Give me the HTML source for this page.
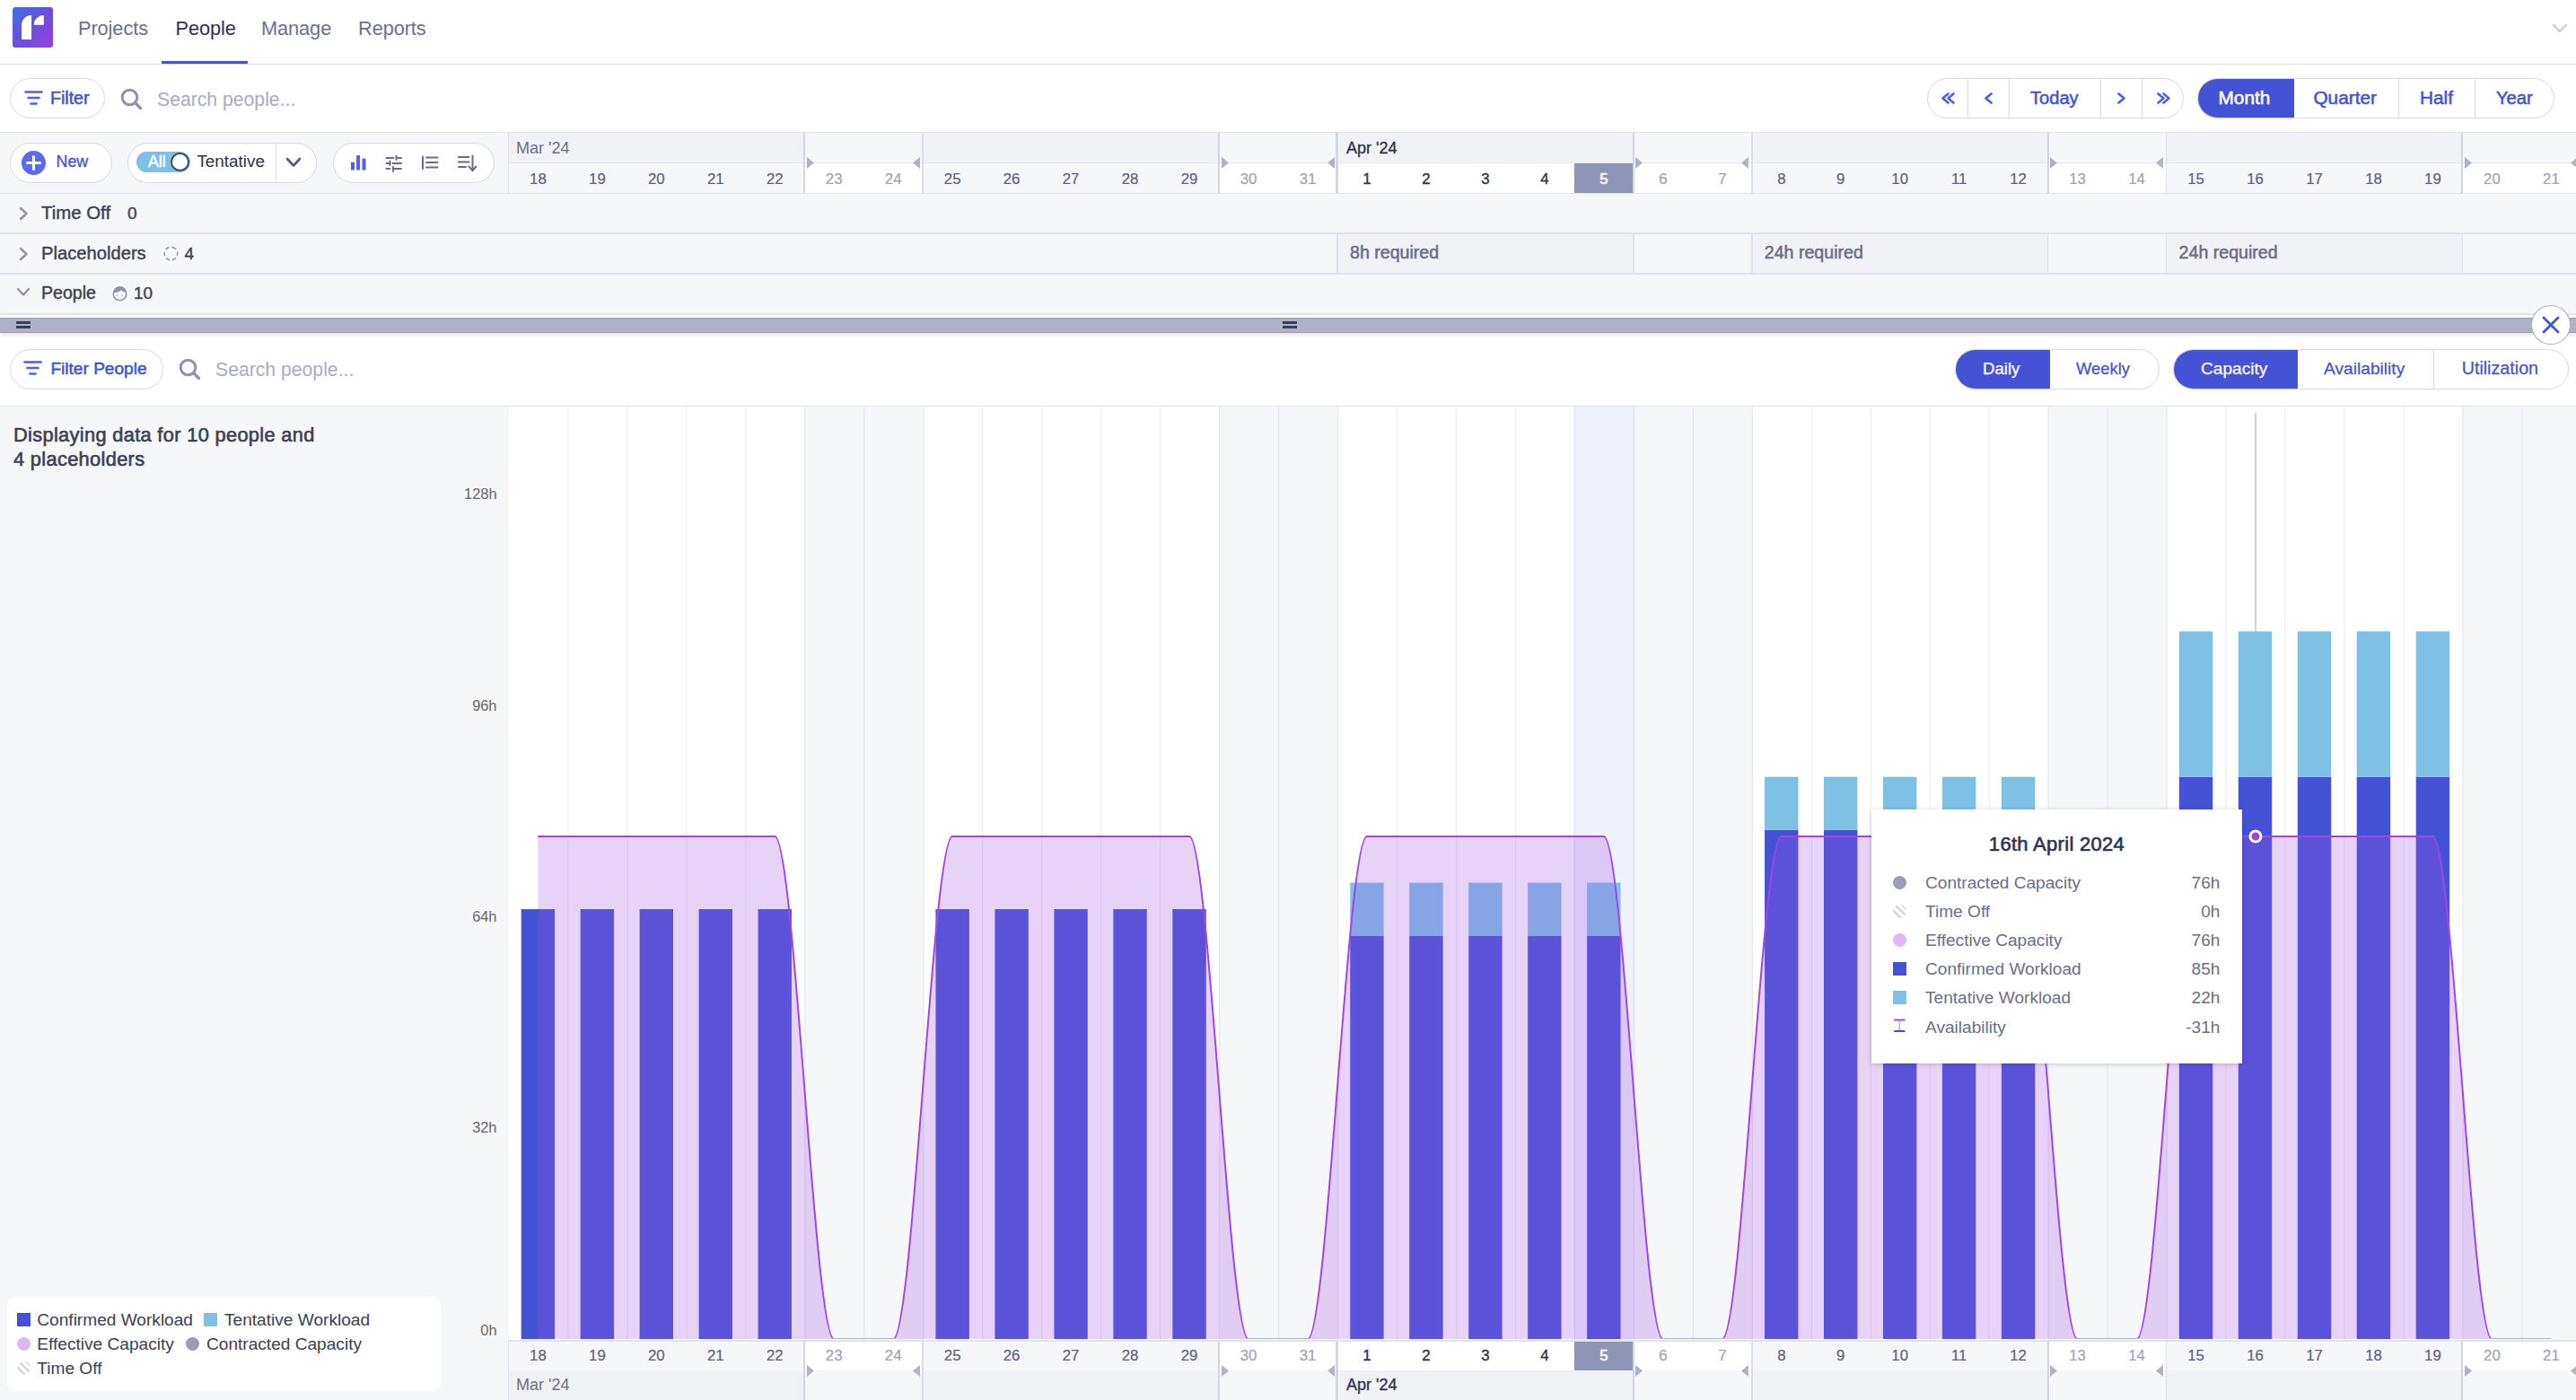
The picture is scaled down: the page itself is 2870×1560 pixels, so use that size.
<!DOCTYPE html><html><head><meta charset="utf-8"><style>

*{margin:0;padding:0;box-sizing:border-box}
html,body{width:2870px;height:1560px;overflow:hidden;background:#fff;font-family:"Liberation Sans", sans-serif}
.a{position:absolute}
.t{position:absolute;white-space:nowrap;line-height:1}
.btn{position:absolute;border:1.5px solid #d6d8e4;border-radius:30px;background:#fff}

</style></head><body>
<div class="a" style="left:0;top:0;width:2870px;height:72px;background:#fff;border-bottom:1px solid #dfe1e9"></div>
<svg class="a" style="left:14px;top:8px" width="45" height="45" viewBox="0 0 45 45">
<defs><linearGradient id="lg" x1="0" y1="0" x2="1" y2="1"><stop offset="0" stop-color="#3d6ee6"/><stop offset="0.5" stop-color="#6a4fdf"/><stop offset="1" stop-color="#9b3ed8"/></linearGradient></defs>
<rect x="0" y="0" width="45" height="45" rx="3" fill="url(#lg)"/>
<path d="M21.07 8.9 L21.07 35.9 L10.1 35.9 L10.1 19.9 A10.97 11 0 0 1 21.07 8.9 Z" fill="#fff"/>
<path d="M34.8 8.9 L34.8 19.7 L23.8 19.7 A11 10.8 0 0 1 34.8 8.9 Z" fill="#fff"/>
</svg>
<div class="t" style="left:87.0px;top:20.9px;font-size:21.8px;color:#6b7190;font-weight:400;letter-spacing:-0.1px">Projects</div>
<div class="t" style="left:195.5px;top:20.9px;font-size:21.8px;color:#2d3250;font-weight:400;letter-spacing:-0.1px">People</div>
<div class="t" style="left:291.0px;top:20.9px;font-size:21.8px;color:#6b7190;font-weight:400;letter-spacing:-0.1px">Manage</div>
<div class="t" style="left:399.0px;top:20.9px;font-size:21.8px;color:#6b7190;font-weight:400;letter-spacing:-0.1px">Reports</div>
<div class="a" style="left:180px;top:68px;width:96px;height:3px;background:#4453d6"></div>
<svg class="a" style="left:2843px;top:26px" width="18" height="12" viewBox="0 0 18 12"><path d="M2 2 L9 9 L16 2" fill="none" stroke="#c8cbd9" stroke-width="2.2" stroke-linecap="round" stroke-linejoin="round"/></svg>
<div class="btn" style="left:11px;top:87px;width:106px;height:45px"></div>
<svg class="a" style="left:26.5px;top:100.5px" width="21" height="17" viewBox="0 0 21 17"><g stroke="#4f5ff0" stroke-width="2.6" stroke-linecap="round"><line x1="1.5" y1="1.5" x2="19.5" y2="1.5"/><line x1="4.5" y1="8" x2="16.5" y2="8"/><line x1="7.5" y1="14.5" x2="13.5" y2="14.5"/></g></svg>
<div class="t" style="left:56.0px;top:99.6px;font-size:19.6px;color:#4453d6;font-weight:400;-webkit-text-stroke:0.55px #4453d6;">Filter</div>
<svg class="a" style="left:134px;top:98px" width="25" height="25" viewBox="0 0 25 25"><circle cx="10.5" cy="10.5" r="8.3" fill="none" stroke="#8f93ab" stroke-width="3"/><line x1="16.8" y1="16.8" x2="22.5" y2="22.5" stroke="#8f93ab" stroke-width="3.4" stroke-linecap="round"/></svg>
<div class="t" style="left:175.0px;top:100.0px;font-size:21.2px;color:#a9acc3;font-weight:400;">Search people...</div>
<div class="btn" style="left:2147px;top:87px;width:286px;height:45px"></div>
<div class="a" style="left:2191.7px;top:87px;width:1.5px;height:45px;background:#d6d8e4"></div>
<div class="a" style="left:2237.7px;top:87px;width:1.5px;height:45px;background:#d6d8e4"></div>
<div class="a" style="left:2339.6px;top:87px;width:1.5px;height:45px;background:#d6d8e4"></div>
<div class="a" style="left:2385.6px;top:87px;width:1.5px;height:45px;background:#d6d8e4"></div>
<svg class="a" style="left:2162.5px;top:102.5px" width="9" height="13" viewBox="0 0 9 13"><path d="M7.5 1.5 L1.5 6.5 L7.5 11.5" fill="none" stroke="#4f5ff0" stroke-width="2.6" stroke-linecap="round" stroke-linejoin="round"/></svg>
<svg class="a" style="left:2168.5px;top:102.5px" width="9" height="13" viewBox="0 0 9 13"><path d="M7.5 1.5 L1.5 6.5 L7.5 11.5" fill="none" stroke="#4f5ff0" stroke-width="2.6" stroke-linecap="round" stroke-linejoin="round"/></svg>
<svg class="a" style="left:2211px;top:102.5px" width="9" height="13" viewBox="0 0 9 13"><path d="M7.5 1.5 L1.5 6.5 L7.5 11.5" fill="none" stroke="#4f5ff0" stroke-width="2.6" stroke-linecap="round" stroke-linejoin="round"/></svg>
<svg class="a" style="left:2358.5px;top:102.5px" width="9" height="13" viewBox="0 0 9 13"><path d="M1.5 1.5 L7.5 6.5 L1.5 11.5" fill="none" stroke="#4f5ff0" stroke-width="2.6" stroke-linecap="round" stroke-linejoin="round"/></svg>
<svg class="a" style="left:2402.5px;top:102.5px" width="9" height="13" viewBox="0 0 9 13"><path d="M1.5 1.5 L7.5 6.5 L1.5 11.5" fill="none" stroke="#4f5ff0" stroke-width="2.6" stroke-linecap="round" stroke-linejoin="round"/></svg>
<svg class="a" style="left:2408.5px;top:102.5px" width="9" height="13" viewBox="0 0 9 13"><path d="M1.5 1.5 L7.5 6.5 L1.5 11.5" fill="none" stroke="#4f5ff0" stroke-width="2.6" stroke-linecap="round" stroke-linejoin="round"/></svg>
<div class="t" style="left:2262.0px;top:98.9px;font-size:20.1px;color:#4453d6;font-weight:400;-webkit-text-stroke:0.55px #4453d6;">Today</div>
<div class="btn" style="left:2448px;top:87px;width:398px;height:45px;overflow:hidden"><div class="a" style="left:-1px;top:-1px;width:107.5px;height:45px;background:#4453d6"></div></div>
<div class="a" style="left:2671.8px;top:87px;width:1.5px;height:45px;background:#d6d8e4"></div>
<div class="a" style="left:2756.9px;top:87px;width:1.5px;height:45px;background:#d6d8e4"></div>
<div class="t" style="left:2471.5px;top:98.8px;font-size:20.8px;color:#fff;font-weight:400;-webkit-text-stroke:0.55px #fff;">Month</div>
<div class="t" style="left:2577.4px;top:98.8px;font-size:20.8px;color:#4453d6;font-weight:400;-webkit-text-stroke:0.55px #4453d6;">Quarter</div>
<div class="t" style="left:2696.0px;top:98.8px;font-size:20.8px;color:#4453d6;font-weight:400;-webkit-text-stroke:0.55px #4453d6;">Half</div>
<div class="t" style="left:2781.0px;top:99.3px;font-size:20.2px;color:#4453d6;font-weight:400;-webkit-text-stroke:0.55px #4453d6;">Year</div>
<div class="a" style="left:0;top:147px;width:2870px;height:203px;background:#f6f7f9;border-top:1.5px solid #e2e4ec"></div>
<div class="a" style="left:566.40px;top:148px;width:66.47px;height:33.5px;background:#f1f2f5"></div>
<div class="a" style="left:566.40px;top:181.5px;width:66.47px;height:33.5px;background:#f6f7f9"></div>
<div class="a" style="left:632.37px;top:148px;width:66.47px;height:33.5px;background:#f1f2f5"></div>
<div class="a" style="left:632.37px;top:181.5px;width:66.47px;height:33.5px;background:#f6f7f9"></div>
<div class="a" style="left:698.34px;top:148px;width:66.47px;height:33.5px;background:#f1f2f5"></div>
<div class="a" style="left:698.34px;top:181.5px;width:66.47px;height:33.5px;background:#f6f7f9"></div>
<div class="a" style="left:764.31px;top:148px;width:66.47px;height:33.5px;background:#f1f2f5"></div>
<div class="a" style="left:764.31px;top:181.5px;width:66.47px;height:33.5px;background:#f6f7f9"></div>
<div class="a" style="left:830.28px;top:148px;width:66.47px;height:33.5px;background:#f1f2f5"></div>
<div class="a" style="left:830.28px;top:181.5px;width:66.47px;height:33.5px;background:#f6f7f9"></div>
<div class="a" style="left:896.25px;top:148px;width:66.47px;height:33.5px;background:#f6f7f9"></div>
<div class="a" style="left:896.25px;top:181.5px;width:66.47px;height:33.5px;background:#fff"></div>
<div class="a" style="left:962.22px;top:148px;width:66.47px;height:33.5px;background:#f6f7f9"></div>
<div class="a" style="left:962.22px;top:181.5px;width:66.47px;height:33.5px;background:#fff"></div>
<div class="a" style="left:1028.19px;top:148px;width:66.47px;height:33.5px;background:#f1f2f5"></div>
<div class="a" style="left:1028.19px;top:181.5px;width:66.47px;height:33.5px;background:#f6f7f9"></div>
<div class="a" style="left:1094.16px;top:148px;width:66.47px;height:33.5px;background:#f1f2f5"></div>
<div class="a" style="left:1094.16px;top:181.5px;width:66.47px;height:33.5px;background:#f6f7f9"></div>
<div class="a" style="left:1160.13px;top:148px;width:66.47px;height:33.5px;background:#f1f2f5"></div>
<div class="a" style="left:1160.13px;top:181.5px;width:66.47px;height:33.5px;background:#f6f7f9"></div>
<div class="a" style="left:1226.10px;top:148px;width:66.47px;height:33.5px;background:#f1f2f5"></div>
<div class="a" style="left:1226.10px;top:181.5px;width:66.47px;height:33.5px;background:#f6f7f9"></div>
<div class="a" style="left:1292.07px;top:148px;width:66.47px;height:33.5px;background:#f1f2f5"></div>
<div class="a" style="left:1292.07px;top:181.5px;width:66.47px;height:33.5px;background:#f6f7f9"></div>
<div class="a" style="left:1358.04px;top:148px;width:66.47px;height:33.5px;background:#f6f7f9"></div>
<div class="a" style="left:1358.04px;top:181.5px;width:66.47px;height:33.5px;background:#fff"></div>
<div class="a" style="left:1424.01px;top:148px;width:66.47px;height:33.5px;background:#f6f7f9"></div>
<div class="a" style="left:1424.01px;top:181.5px;width:66.47px;height:33.5px;background:#fff"></div>
<div class="a" style="left:1489.98px;top:148px;width:66.47px;height:33.5px;background:#f1f2f5"></div>
<div class="a" style="left:1489.98px;top:181.5px;width:66.47px;height:33.5px;background:#fff"></div>
<div class="a" style="left:1555.95px;top:148px;width:66.47px;height:33.5px;background:#f1f2f5"></div>
<div class="a" style="left:1555.95px;top:181.5px;width:66.47px;height:33.5px;background:#fff"></div>
<div class="a" style="left:1621.92px;top:148px;width:66.47px;height:33.5px;background:#f1f2f5"></div>
<div class="a" style="left:1621.92px;top:181.5px;width:66.47px;height:33.5px;background:#fff"></div>
<div class="a" style="left:1687.89px;top:148px;width:66.47px;height:33.5px;background:#f1f2f5"></div>
<div class="a" style="left:1687.89px;top:181.5px;width:66.47px;height:33.5px;background:#fff"></div>
<div class="a" style="left:1753.86px;top:148px;width:66.47px;height:33.5px;background:#f1f2f5"></div>
<div class="a" style="left:1753.86px;top:181.5px;width:66.47px;height:33.5px;background:#8e95b8"></div>
<div class="a" style="left:1819.83px;top:148px;width:66.47px;height:33.5px;background:#f6f7f9"></div>
<div class="a" style="left:1819.83px;top:181.5px;width:66.47px;height:33.5px;background:#fff"></div>
<div class="a" style="left:1885.80px;top:148px;width:66.47px;height:33.5px;background:#f6f7f9"></div>
<div class="a" style="left:1885.80px;top:181.5px;width:66.47px;height:33.5px;background:#fff"></div>
<div class="a" style="left:1951.77px;top:148px;width:66.47px;height:33.5px;background:#f1f2f5"></div>
<div class="a" style="left:1951.77px;top:181.5px;width:66.47px;height:33.5px;background:#f6f7f9"></div>
<div class="a" style="left:2017.74px;top:148px;width:66.47px;height:33.5px;background:#f1f2f5"></div>
<div class="a" style="left:2017.74px;top:181.5px;width:66.47px;height:33.5px;background:#f6f7f9"></div>
<div class="a" style="left:2083.71px;top:148px;width:66.47px;height:33.5px;background:#f1f2f5"></div>
<div class="a" style="left:2083.71px;top:181.5px;width:66.47px;height:33.5px;background:#f6f7f9"></div>
<div class="a" style="left:2149.68px;top:148px;width:66.47px;height:33.5px;background:#f1f2f5"></div>
<div class="a" style="left:2149.68px;top:181.5px;width:66.47px;height:33.5px;background:#f6f7f9"></div>
<div class="a" style="left:2215.65px;top:148px;width:66.47px;height:33.5px;background:#f1f2f5"></div>
<div class="a" style="left:2215.65px;top:181.5px;width:66.47px;height:33.5px;background:#f6f7f9"></div>
<div class="a" style="left:2281.62px;top:148px;width:66.47px;height:33.5px;background:#f6f7f9"></div>
<div class="a" style="left:2281.62px;top:181.5px;width:66.47px;height:33.5px;background:#fff"></div>
<div class="a" style="left:2347.59px;top:148px;width:66.47px;height:33.5px;background:#f6f7f9"></div>
<div class="a" style="left:2347.59px;top:181.5px;width:66.47px;height:33.5px;background:#fff"></div>
<div class="a" style="left:2413.56px;top:148px;width:66.47px;height:33.5px;background:#f1f2f5"></div>
<div class="a" style="left:2413.56px;top:181.5px;width:66.47px;height:33.5px;background:#f6f7f9"></div>
<div class="a" style="left:2479.53px;top:148px;width:66.47px;height:33.5px;background:#f1f2f5"></div>
<div class="a" style="left:2479.53px;top:181.5px;width:66.47px;height:33.5px;background:#f6f7f9"></div>
<div class="a" style="left:2545.50px;top:148px;width:66.47px;height:33.5px;background:#f1f2f5"></div>
<div class="a" style="left:2545.50px;top:181.5px;width:66.47px;height:33.5px;background:#f6f7f9"></div>
<div class="a" style="left:2611.47px;top:148px;width:66.47px;height:33.5px;background:#f1f2f5"></div>
<div class="a" style="left:2611.47px;top:181.5px;width:66.47px;height:33.5px;background:#f6f7f9"></div>
<div class="a" style="left:2677.44px;top:148px;width:66.47px;height:33.5px;background:#f1f2f5"></div>
<div class="a" style="left:2677.44px;top:181.5px;width:66.47px;height:33.5px;background:#f6f7f9"></div>
<div class="a" style="left:2743.41px;top:148px;width:66.47px;height:33.5px;background:#f6f7f9"></div>
<div class="a" style="left:2743.41px;top:181.5px;width:66.47px;height:33.5px;background:#fff"></div>
<div class="a" style="left:2809.38px;top:148px;width:66.47px;height:33.5px;background:#f6f7f9"></div>
<div class="a" style="left:2809.38px;top:181.5px;width:66.47px;height:33.5px;background:#fff"></div>
<div class="a" style="left:566px;top:181px;width:2304px;height:1px;background:#e6e7ee"></div>
<div class="a" style="left:0;top:214.5px;width:2870px;height:1.2px;background:#e2e4ec"></div>
<div class="a" style="left:565.65px;top:148px;width:1.5px;height:67px;background:#dcdee8"></div>
<div class="a" style="left:895.25px;top:148px;width:2px;height:67px;background:#d3d5e1"></div>
<div class="a" style="left:1027.44px;top:148px;width:1.5px;height:67px;background:#dcdee8"></div>
<div class="a" style="left:1357.04px;top:148px;width:2px;height:67px;background:#d3d5e1"></div>
<div class="a" style="left:1488.48px;top:148px;width:3px;height:67px;background:#d3d5e1"></div>
<div class="a" style="left:1818.83px;top:148px;width:2px;height:67px;background:#d3d5e1"></div>
<div class="a" style="left:1951.02px;top:148px;width:1.5px;height:67px;background:#dcdee8"></div>
<div class="a" style="left:2280.62px;top:148px;width:2px;height:67px;background:#d3d5e1"></div>
<div class="a" style="left:2412.81px;top:148px;width:1.5px;height:67px;background:#dcdee8"></div>
<div class="a" style="left:2742.41px;top:148px;width:2px;height:67px;background:#d3d5e1"></div>
<div class="a" style="left:2874.60px;top:148px;width:1.5px;height:67px;background:#dcdee8"></div>
<svg class="a" style="left:898.8px;top:175.0px" width="9" height="13" viewBox="0 0 9 13"><path d="M0 0 L8 6.5 L0 13 Z" fill="#b0b3c6"/></svg>
<svg class="a" style="left:1015.7px;top:175.0px" width="9" height="13" viewBox="0 0 9 13"><path d="M9 0 L1 6.5 L9 13 Z" fill="#b0b3c6"/></svg>
<svg class="a" style="left:1360.5px;top:175.0px" width="9" height="13" viewBox="0 0 9 13"><path d="M0 0 L8 6.5 L0 13 Z" fill="#b0b3c6"/></svg>
<svg class="a" style="left:1477.5px;top:175.0px" width="9" height="13" viewBox="0 0 9 13"><path d="M9 0 L1 6.5 L9 13 Z" fill="#b0b3c6"/></svg>
<svg class="a" style="left:1822.3px;top:175.0px" width="9" height="13" viewBox="0 0 9 13"><path d="M0 0 L8 6.5 L0 13 Z" fill="#b0b3c6"/></svg>
<svg class="a" style="left:1939.3px;top:175.0px" width="9" height="13" viewBox="0 0 9 13"><path d="M9 0 L1 6.5 L9 13 Z" fill="#b0b3c6"/></svg>
<svg class="a" style="left:2284.1px;top:175.0px" width="9" height="13" viewBox="0 0 9 13"><path d="M0 0 L8 6.5 L0 13 Z" fill="#b0b3c6"/></svg>
<svg class="a" style="left:2401.1px;top:175.0px" width="9" height="13" viewBox="0 0 9 13"><path d="M9 0 L1 6.5 L9 13 Z" fill="#b0b3c6"/></svg>
<svg class="a" style="left:2745.9px;top:175.0px" width="9" height="13" viewBox="0 0 9 13"><path d="M0 0 L8 6.5 L0 13 Z" fill="#b0b3c6"/></svg>
<svg class="a" style="left:2862.8px;top:175.0px" width="9" height="13" viewBox="0 0 9 13"><path d="M9 0 L1 6.5 L9 13 Z" fill="#b0b3c6"/></svg>
<div class="t" style="left:575.0px;top:156.1px;font-size:18px;color:#6b6f88;font-weight:400;">Mar '24</div>
<div class="t" style="left:1500.0px;top:156.1px;font-size:18px;color:#2d3250;font-weight:400;-webkit-text-stroke:0.35px #2d3250;">Apr '24</div>
<div class="t" style="left:299.4px;width:600px;text-align:center;top:191.7px;font-size:16.8px;color:#5c6080;font-weight:400;-webkit-text-stroke:0.2px #5c6080;">18</div>
<div class="t" style="left:365.4px;width:600px;text-align:center;top:191.7px;font-size:16.8px;color:#5c6080;font-weight:400;-webkit-text-stroke:0.2px #5c6080;">19</div>
<div class="t" style="left:431.3px;width:600px;text-align:center;top:191.7px;font-size:16.8px;color:#5c6080;font-weight:400;-webkit-text-stroke:0.2px #5c6080;">20</div>
<div class="t" style="left:497.3px;width:600px;text-align:center;top:191.7px;font-size:16.8px;color:#5c6080;font-weight:400;-webkit-text-stroke:0.2px #5c6080;">21</div>
<div class="t" style="left:563.3px;width:600px;text-align:center;top:191.7px;font-size:16.8px;color:#5c6080;font-weight:400;-webkit-text-stroke:0.2px #5c6080;">22</div>
<div class="t" style="left:629.2px;width:600px;text-align:center;top:191.7px;font-size:16.8px;color:#9fa2b6;font-weight:400;-webkit-text-stroke:0.2px #9fa2b6;">23</div>
<div class="t" style="left:695.2px;width:600px;text-align:center;top:191.7px;font-size:16.8px;color:#9fa2b6;font-weight:400;-webkit-text-stroke:0.2px #9fa2b6;">24</div>
<div class="t" style="left:761.2px;width:600px;text-align:center;top:191.7px;font-size:16.8px;color:#5c6080;font-weight:400;-webkit-text-stroke:0.2px #5c6080;">25</div>
<div class="t" style="left:827.1px;width:600px;text-align:center;top:191.7px;font-size:16.8px;color:#5c6080;font-weight:400;-webkit-text-stroke:0.2px #5c6080;">26</div>
<div class="t" style="left:893.1px;width:600px;text-align:center;top:191.7px;font-size:16.8px;color:#5c6080;font-weight:400;-webkit-text-stroke:0.2px #5c6080;">27</div>
<div class="t" style="left:959.1px;width:600px;text-align:center;top:191.7px;font-size:16.8px;color:#5c6080;font-weight:400;-webkit-text-stroke:0.2px #5c6080;">28</div>
<div class="t" style="left:1025.1px;width:600px;text-align:center;top:191.7px;font-size:16.8px;color:#5c6080;font-weight:400;-webkit-text-stroke:0.2px #5c6080;">29</div>
<div class="t" style="left:1091.0px;width:600px;text-align:center;top:191.7px;font-size:16.8px;color:#9fa2b6;font-weight:400;-webkit-text-stroke:0.2px #9fa2b6;">30</div>
<div class="t" style="left:1157.0px;width:600px;text-align:center;top:191.7px;font-size:16.8px;color:#9fa2b6;font-weight:400;-webkit-text-stroke:0.2px #9fa2b6;">31</div>
<div class="t" style="left:1223.0px;width:600px;text-align:center;top:191.7px;font-size:16.8px;color:#2d3250;font-weight:400;-webkit-text-stroke:0.35px #2d3250;">1</div>
<div class="t" style="left:1288.9px;width:600px;text-align:center;top:191.7px;font-size:16.8px;color:#2d3250;font-weight:400;-webkit-text-stroke:0.35px #2d3250;">2</div>
<div class="t" style="left:1354.9px;width:600px;text-align:center;top:191.7px;font-size:16.8px;color:#2d3250;font-weight:400;-webkit-text-stroke:0.35px #2d3250;">3</div>
<div class="t" style="left:1420.9px;width:600px;text-align:center;top:191.7px;font-size:16.8px;color:#2d3250;font-weight:400;-webkit-text-stroke:0.35px #2d3250;">4</div>
<div class="t" style="left:1486.8px;width:600px;text-align:center;top:191.7px;font-size:16.8px;color:#fff;font-weight:400;-webkit-text-stroke:0.6px #fff;">5</div>
<div class="t" style="left:1552.8px;width:600px;text-align:center;top:191.7px;font-size:16.8px;color:#9fa2b6;font-weight:400;-webkit-text-stroke:0.2px #9fa2b6;">6</div>
<div class="t" style="left:1618.8px;width:600px;text-align:center;top:191.7px;font-size:16.8px;color:#9fa2b6;font-weight:400;-webkit-text-stroke:0.2px #9fa2b6;">7</div>
<div class="t" style="left:1684.8px;width:600px;text-align:center;top:191.7px;font-size:16.8px;color:#5c6080;font-weight:400;-webkit-text-stroke:0.2px #5c6080;">8</div>
<div class="t" style="left:1750.7px;width:600px;text-align:center;top:191.7px;font-size:16.8px;color:#5c6080;font-weight:400;-webkit-text-stroke:0.2px #5c6080;">9</div>
<div class="t" style="left:1816.7px;width:600px;text-align:center;top:191.7px;font-size:16.8px;color:#5c6080;font-weight:400;-webkit-text-stroke:0.2px #5c6080;">10</div>
<div class="t" style="left:1882.7px;width:600px;text-align:center;top:191.7px;font-size:16.8px;color:#5c6080;font-weight:400;-webkit-text-stroke:0.2px #5c6080;">11</div>
<div class="t" style="left:1948.6px;width:600px;text-align:center;top:191.7px;font-size:16.8px;color:#5c6080;font-weight:400;-webkit-text-stroke:0.2px #5c6080;">12</div>
<div class="t" style="left:2014.6px;width:600px;text-align:center;top:191.7px;font-size:16.8px;color:#9fa2b6;font-weight:400;-webkit-text-stroke:0.2px #9fa2b6;">13</div>
<div class="t" style="left:2080.6px;width:600px;text-align:center;top:191.7px;font-size:16.8px;color:#9fa2b6;font-weight:400;-webkit-text-stroke:0.2px #9fa2b6;">14</div>
<div class="t" style="left:2146.5px;width:600px;text-align:center;top:191.7px;font-size:16.8px;color:#5c6080;font-weight:400;-webkit-text-stroke:0.2px #5c6080;">15</div>
<div class="t" style="left:2212.5px;width:600px;text-align:center;top:191.7px;font-size:16.8px;color:#5c6080;font-weight:400;-webkit-text-stroke:0.2px #5c6080;">16</div>
<div class="t" style="left:2278.5px;width:600px;text-align:center;top:191.7px;font-size:16.8px;color:#5c6080;font-weight:400;-webkit-text-stroke:0.2px #5c6080;">17</div>
<div class="t" style="left:2344.5px;width:600px;text-align:center;top:191.7px;font-size:16.8px;color:#5c6080;font-weight:400;-webkit-text-stroke:0.2px #5c6080;">18</div>
<div class="t" style="left:2410.4px;width:600px;text-align:center;top:191.7px;font-size:16.8px;color:#5c6080;font-weight:400;-webkit-text-stroke:0.2px #5c6080;">19</div>
<div class="t" style="left:2476.4px;width:600px;text-align:center;top:191.7px;font-size:16.8px;color:#9fa2b6;font-weight:400;-webkit-text-stroke:0.2px #9fa2b6;">20</div>
<div class="t" style="left:2542.4px;width:600px;text-align:center;top:191.7px;font-size:16.8px;color:#9fa2b6;font-weight:400;-webkit-text-stroke:0.2px #9fa2b6;">21</div>
<div class="btn" style="left:11px;top:159px;width:114px;height:45px"></div>
<svg class="a" style="left:24px;top:168px" width="27" height="27" viewBox="0 0 27 27"><circle cx="13.5" cy="13.5" r="13.5" fill="#5b6af0"/><g stroke="#fff" stroke-width="3" stroke-linecap="round"><line x1="13.5" y1="6.5" x2="13.5" y2="20.5"/><line x1="6.5" y1="13.5" x2="20.5" y2="13.5"/></g></svg>
<div class="t" style="left:62.5px;top:171.8px;font-size:17.9px;color:#4453d6;font-weight:400;-webkit-text-stroke:0.3px #4453d6;">New</div>
<div class="btn" style="left:142px;top:159px;width:211px;height:45px"></div>
<div class="a" style="left:306.5px;top:159px;width:1.5px;height:45px;background:#d6d8e4"></div>
<div class="a" style="left:152px;top:169px;width:60px;height:23px;border-radius:12px;background:#7fc1e5"></div>
<div class="t" style="left:165.0px;top:172.4px;font-size:17.8px;color:#fff;font-weight:400;-webkit-text-stroke:0.5px #fff;">All</div>
<div class="a" style="left:190px;top:169.8px;width:21px;height:21px;border-radius:50%;background:#fff;border:2px solid #3e4a5e"></div>
<div class="t" style="left:219.4px;top:170.9px;font-size:18.9px;color:#2d3250;font-weight:400;">Tentative</div>
<svg class="a" style="left:318px;top:175px" width="18" height="12" viewBox="0 0 18 12"><path d="M2 2 L9 9.5 L16 2" fill="none" stroke="#555b70" stroke-width="2.6" stroke-linecap="round" stroke-linejoin="round"/></svg>
<div class="btn" style="left:371px;top:159px;width:180px;height:45px"></div>
<svg class="a" style="left:390px;top:172px" width="19" height="19" viewBox="0 0 19 19"><g fill="#4f5ff0"><rect x="1" y="8.7" width="4" height="8.7"/><rect x="7.1" y="1.1" width="3.9" height="16.3"/><rect x="13.5" y="4.6" width="4" height="12.8"/></g></svg>
<svg class="a" style="left:429px;top:173px" width="20" height="19" viewBox="0 0 20 19"><g stroke="#676c8c" stroke-width="1.9" stroke-linecap="round"><line x1="1.5" y1="3" x2="9.5" y2="3"/><line x1="13" y1="3" x2="18" y2="3"/><line x1="12.5" y1="0.8" x2="12.5" y2="5"/><line x1="1.5" y1="9" x2="5" y2="9"/><line x1="8.5" y1="9" x2="18" y2="9"/><line x1="5.5" y1="6.8" x2="5.5" y2="11"/><line x1="1.5" y1="15" x2="5.5" y2="15"/><line x1="9" y1="15" x2="18" y2="15"/><line x1="9" y1="12.8" x2="9" y2="18"/></g></svg>
<svg class="a" style="left:469px;top:173px" width="20" height="17" viewBox="0 0 20 17"><g stroke="#676c8c" stroke-width="2" stroke-linecap="round"><line x1="2" y1="1.5" x2="2" y2="15"/><line x1="6" y1="2.5" x2="18.5" y2="2.5"/><line x1="6" y1="8" x2="18.5" y2="8"/><line x1="6" y1="13.5" x2="18.5" y2="13.5"/></g></svg>
<svg class="a" style="left:509px;top:172px" width="24" height="20" viewBox="0 0 24 20"><g stroke="#676c8c" stroke-width="2" stroke-linecap="round" fill="none"><line x1="2" y1="3" x2="13.5" y2="3"/><line x1="2" y1="8.5" x2="13.5" y2="8.5"/><line x1="2" y1="14" x2="10" y2="14"/><line x1="17.5" y1="1.5" x2="17.5" y2="18"/><path d="M13.5 13.5 L17.5 18 L21.5 13.5"/></g></svg>
<div class="a" style="left:565.5px;top:148px;width:1.5px;height:67px;background:#dfe1ea"></div>
<div class="a" style="left:0;top:259px;width:2870px;height:2px;background:#e2e4ec"></div>
<div class="a" style="left:0;top:304px;width:2870px;height:2px;background:#e2e4ec"></div>
<div class="a" style="left:0;top:348.5px;width:2870px;height:2px;background:#e2e4ec"></div>
<div class="a" style="left:0;top:350.5px;width:2870px;height:3.5px;background:#fff"></div>
<div class="a" style="left:1489.98px;top:261px;width:329.85px;height:43px;background:#f1f2f5"></div>
<div class="a" style="left:1951.77px;top:261px;width:329.85px;height:43px;background:#f1f2f5"></div>
<div class="a" style="left:2413.56px;top:261px;width:329.85px;height:43px;background:#f1f2f5"></div>
<div class="a" style="left:1489.23px;top:261px;width:1.5px;height:43px;background:#e0e2ea"></div>
<div class="a" style="left:1819.08px;top:261px;width:1.5px;height:43px;background:#e0e2ea"></div>
<div class="a" style="left:1951.02px;top:261px;width:1.5px;height:43px;background:#e0e2ea"></div>
<div class="a" style="left:2280.87px;top:261px;width:1.5px;height:43px;background:#e0e2ea"></div>
<div class="a" style="left:2412.81px;top:261px;width:1.5px;height:43px;background:#e0e2ea"></div>
<div class="a" style="left:2742.66px;top:261px;width:1.5px;height:43px;background:#e0e2ea"></div>
<div class="t" style="left:1504.0px;top:272.3px;font-size:19.6px;color:#6b6f88;font-weight:400;-webkit-text-stroke:0.55px #6b6f88;">8h required</div>
<div class="t" style="left:1965.8px;top:272.3px;font-size:19.6px;color:#6b6f88;font-weight:400;-webkit-text-stroke:0.55px #6b6f88;">24h required</div>
<div class="t" style="left:2427.6px;top:272.3px;font-size:19.6px;color:#6b6f88;font-weight:400;-webkit-text-stroke:0.55px #6b6f88;">24h required</div>
<svg class="a" style="left:20.5px;top:229.5px" width="11" height="16" viewBox="0 0 11 16"><path d="M2 2 L8.5 8 L2 14" fill="none" stroke="#8f93ab" stroke-width="2.4" stroke-linecap="round" stroke-linejoin="round"/></svg>
<div class="t" style="left:46.0px;top:226.7px;font-size:20.4px;color:#3b4054;font-weight:400;-webkit-text-stroke:0.4px #3b4054;">Time Off</div>
<div class="t" style="left:142.0px;top:227.8px;font-size:19px;color:#3b4054;font-weight:400;-webkit-text-stroke:0.35px #3b4054;">0</div>
<svg class="a" style="left:20.5px;top:274.5px" width="11" height="16" viewBox="0 0 11 16"><path d="M2 2 L8.5 8 L2 14" fill="none" stroke="#8f93ab" stroke-width="2.4" stroke-linecap="round" stroke-linejoin="round"/></svg>
<div class="t" style="left:46.0px;top:271.8px;font-size:20.2px;color:#3b4054;font-weight:400;-webkit-text-stroke:0.4px #3b4054;">Placeholders</div>
<svg class="a" style="left:181.5px;top:274px" width="17" height="17" viewBox="0 0 17 17"><circle cx="8.5" cy="8.5" r="7.3" fill="none" stroke="#8f93ab" stroke-width="1.5" stroke-dasharray="4.6 2.8" transform="rotate(-75 8.5 8.5)"/></svg>
<div class="t" style="left:205.5px;top:272.5px;font-size:19px;color:#3b4054;font-weight:400;-webkit-text-stroke:0.35px #3b4054;">4</div>
<svg class="a" style="left:18px;top:320px" width="16" height="11" viewBox="0 0 16 11"><path d="M2 2 L8 8.5 L14 2" fill="none" stroke="#8f93ab" stroke-width="2.4" stroke-linecap="round" stroke-linejoin="round"/></svg>
<div class="t" style="left:46.0px;top:317.3px;font-size:19.6px;color:#3b4054;font-weight:400;-webkit-text-stroke:0.4px #3b4054;">People</div>
<svg class="a" style="left:124.5px;top:318.5px" width="17" height="17" viewBox="0 0 17 17"><circle cx="8.5" cy="8.5" r="7.2" fill="none" stroke="#8f93ab" stroke-width="1.6"/><path d="M1.3 7.2 A7.2 7.2 0 0 1 15.7 7.2 L15.7 6.6 C13.5 6.4 11.5 5.6 10.2 4.2 C8.5 6 5 7 1.3 7.2 Z" fill="#8f93ab"/><circle cx="5.5" cy="10.2" r="0.8" fill="#8f93ab"/><circle cx="11.2" cy="10.2" r="0.8" fill="#8f93ab"/></svg>
<div class="t" style="left:149.0px;top:317.2px;font-size:19px;color:#3b4054;font-weight:400;-webkit-text-stroke:0.35px #3b4054;">10</div>
<div class="a" style="left:0;top:354px;width:2870px;height:17px;background:#afb1c4;border-top:1.5px solid #9a9db2;border-bottom:1.5px solid #9a9db2;box-shadow:0 2px 5px rgba(0,0,0,0.12)"></div>
<div class="a" style="left:17.5px;top:358px;width:16px;height:2.9px;background:#373d5c"></div>
<div class="a" style="left:17.5px;top:363px;width:16px;height:2.9px;background:#373d5c"></div>
<div class="a" style="left:1428.5px;top:358px;width:16px;height:2.9px;background:#373d5c"></div>
<div class="a" style="left:1428.5px;top:363px;width:16px;height:2.9px;background:#373d5c"></div>
<div class="a" style="left:2820px;top:339.5px;width:43.5px;height:44.5px;border-radius:50%;background:#fff;border:1.5px solid #a9acc0"></div>
<svg class="a" style="left:2832px;top:352px" width="20" height="20" viewBox="0 0 20 20"><g stroke="#4453d6" stroke-width="2.8" stroke-linecap="round"><line x1="2" y1="2" x2="18" y2="18"/><line x1="18" y1="2" x2="2" y2="18"/></g></svg>
<div class="btn" style="left:11px;top:389px;width:171px;height:45px"></div>
<svg class="a" style="left:26px;top:402px" width="21" height="17" viewBox="0 0 21 17"><g stroke="#4f5ff0" stroke-width="2.6" stroke-linecap="round"><line x1="1.5" y1="1.5" x2="19.5" y2="1.5"/><line x1="4.5" y1="8" x2="16.5" y2="8"/><line x1="7.5" y1="14.5" x2="13.5" y2="14.5"/></g></svg>
<div class="t" style="left:56.4px;top:401.3px;font-size:19.1px;color:#4453d6;font-weight:400;-webkit-text-stroke:0.55px #4453d6;">Filter People</div>
<svg class="a" style="left:199px;top:399px" width="25" height="25" viewBox="0 0 25 25"><circle cx="10.5" cy="10.5" r="8.3" fill="none" stroke="#8f93ab" stroke-width="3"/><line x1="16.8" y1="16.8" x2="22.5" y2="22.5" stroke="#8f93ab" stroke-width="3.4" stroke-linecap="round"/></svg>
<div class="t" style="left:240.0px;top:401.0px;font-size:21.2px;color:#a9acc3;font-weight:400;">Search people...</div>
<div class="btn" style="left:2178px;top:389px;width:228px;height:45px;overflow:hidden"><div class="a" style="left:-1px;top:-1px;width:105.5px;height:45px;background:#4453d6"></div></div>
<div class="t" style="left:2209.0px;top:401.7px;font-size:18.6px;color:#fff;font-weight:400;-webkit-text-stroke:0.25px #fff;">Daily</div>
<div class="t" style="left:2313.0px;top:401.9px;font-size:18.4px;color:#4453d6;font-weight:400;-webkit-text-stroke:0.25px #4453d6;">Weekly</div>
<div class="btn" style="left:2421px;top:389px;width:441px;height:45px;overflow:hidden"><div class="a" style="left:-1px;top:-1px;width:139px;height:45px;background:#4453d6"></div></div>
<div class="a" style="left:2710.7px;top:389px;width:1.5px;height:45px;background:#d6d8e4"></div>
<div class="t" style="left:2452.0px;top:401.3px;font-size:19.1px;color:#fff;font-weight:400;-webkit-text-stroke:0.25px #fff;">Capacity</div>
<div class="t" style="left:2589.0px;top:401.2px;font-size:19.2px;color:#4453d6;font-weight:400;-webkit-text-stroke:0.25px #4453d6;">Availability</div>
<div class="t" style="left:2742.7px;top:400.8px;font-size:19.7px;color:#4453d6;font-weight:400;-webkit-text-stroke:0.25px #4453d6;">Utilization</div>
<div class="a" style="left:0;top:451.5px;width:2870px;height:1.5px;background:#e2e4ec"></div>
<div class="a" style="left:0;top:453px;width:566.5px;height:1107px;background:#f6f7f9"></div>
<div class="t" style="left:15.0px;top:473.7px;font-size:21.8px;color:#3b4054;font-weight:400;-webkit-text-stroke:0.6px #3b4054;letter-spacing:0.33px">Displaying data for 10 people and</div>
<div class="t" style="left:15.0px;top:500.7px;font-size:21.8px;color:#3b4054;font-weight:400;-webkit-text-stroke:0.6px #3b4054;letter-spacing:0.33px">4 placeholders</div>
<div class="t" style="right:2316.5px;top:541.5px;font-size:16.4px;color:#666666;font-weight:400;text-align:right;">128h</div>
<div class="t" style="right:2316.5px;top:778.0px;font-size:16.4px;color:#666666;font-weight:400;text-align:right;">96h</div>
<div class="t" style="right:2316.5px;top:1013.3px;font-size:16.4px;color:#666666;font-weight:400;text-align:right;">64h</div>
<div class="t" style="right:2316.5px;top:1248.1px;font-size:16.4px;color:#666666;font-weight:400;text-align:right;">32h</div>
<div class="t" style="right:2316.5px;top:1474.1px;font-size:16.4px;color:#666666;font-weight:400;text-align:right;">0h</div>
<svg class="a" style="left:0;top:0" width="2870" height="1560" viewBox="0 0 2870 1560"><rect x="896.25" y="453" width="65.97" height="1040" fill="#f6f7f9"/><rect x="962.22" y="453" width="65.97" height="1040" fill="#f6f7f9"/><rect x="1358.04" y="453" width="65.97" height="1040" fill="#f6f7f9"/><rect x="1424.01" y="453" width="65.97" height="1040" fill="#f6f7f9"/><rect x="1819.83" y="453" width="65.97" height="1040" fill="#f6f7f9"/><rect x="1885.80" y="453" width="65.97" height="1040" fill="#f6f7f9"/><rect x="2281.62" y="453" width="65.97" height="1040" fill="#f6f7f9"/><rect x="2347.59" y="453" width="65.97" height="1040" fill="#f6f7f9"/><rect x="2743.41" y="453" width="65.97" height="1040" fill="#f6f7f9"/><rect x="2809.38" y="453" width="65.97" height="1040" fill="#f6f7f9"/><rect x="1753.86" y="453" width="65.97" height="1040" fill="#eff1fc"/><line x1="632.97" y1="453" x2="632.97" y2="1493" stroke="#eeeff3" stroke-width="1.2"/><line x1="698.94" y1="453" x2="698.94" y2="1493" stroke="#eeeff3" stroke-width="1.2"/><line x1="764.91" y1="453" x2="764.91" y2="1493" stroke="#eeeff3" stroke-width="1.2"/><line x1="830.88" y1="453" x2="830.88" y2="1493" stroke="#eeeff3" stroke-width="1.2"/><line x1="896.85" y1="453" x2="896.85" y2="1493" stroke="#e6e7ee" stroke-width="1.2"/><line x1="962.82" y1="453" x2="962.82" y2="1493" stroke="#e6e7ee" stroke-width="1.2"/><line x1="1028.79" y1="453" x2="1028.79" y2="1493" stroke="#e6e7ee" stroke-width="1.2"/><line x1="1094.76" y1="453" x2="1094.76" y2="1493" stroke="#eeeff3" stroke-width="1.2"/><line x1="1160.73" y1="453" x2="1160.73" y2="1493" stroke="#eeeff3" stroke-width="1.2"/><line x1="1226.70" y1="453" x2="1226.70" y2="1493" stroke="#eeeff3" stroke-width="1.2"/><line x1="1292.67" y1="453" x2="1292.67" y2="1493" stroke="#eeeff3" stroke-width="1.2"/><line x1="1358.64" y1="453" x2="1358.64" y2="1493" stroke="#e6e7ee" stroke-width="1.2"/><line x1="1424.61" y1="453" x2="1424.61" y2="1493" stroke="#e6e7ee" stroke-width="1.2"/><line x1="1490.58" y1="453" x2="1490.58" y2="1493" stroke="#e6e7ee" stroke-width="1.2"/><line x1="1556.55" y1="453" x2="1556.55" y2="1493" stroke="#eeeff3" stroke-width="1.2"/><line x1="1622.52" y1="453" x2="1622.52" y2="1493" stroke="#eeeff3" stroke-width="1.2"/><line x1="1688.49" y1="453" x2="1688.49" y2="1493" stroke="#eeeff3" stroke-width="1.2"/><line x1="1754.46" y1="453" x2="1754.46" y2="1493" stroke="#dde0f5" stroke-width="1.2"/><line x1="1820.43" y1="453" x2="1820.43" y2="1493" stroke="#dde0f5" stroke-width="1.2"/><line x1="1886.40" y1="453" x2="1886.40" y2="1493" stroke="#e6e7ee" stroke-width="1.2"/><line x1="1952.37" y1="453" x2="1952.37" y2="1493" stroke="#e6e7ee" stroke-width="1.2"/><line x1="2018.34" y1="453" x2="2018.34" y2="1493" stroke="#eeeff3" stroke-width="1.2"/><line x1="2084.31" y1="453" x2="2084.31" y2="1493" stroke="#eeeff3" stroke-width="1.2"/><line x1="2150.28" y1="453" x2="2150.28" y2="1493" stroke="#eeeff3" stroke-width="1.2"/><line x1="2216.25" y1="453" x2="2216.25" y2="1493" stroke="#eeeff3" stroke-width="1.2"/><line x1="2282.22" y1="453" x2="2282.22" y2="1493" stroke="#e6e7ee" stroke-width="1.2"/><line x1="2348.19" y1="453" x2="2348.19" y2="1493" stroke="#e6e7ee" stroke-width="1.2"/><line x1="2414.16" y1="453" x2="2414.16" y2="1493" stroke="#e6e7ee" stroke-width="1.2"/><line x1="2480.13" y1="453" x2="2480.13" y2="1493" stroke="#eeeff3" stroke-width="1.2"/><line x1="2546.10" y1="453" x2="2546.10" y2="1493" stroke="#eeeff3" stroke-width="1.2"/><line x1="2612.07" y1="453" x2="2612.07" y2="1493" stroke="#eeeff3" stroke-width="1.2"/><line x1="2678.04" y1="453" x2="2678.04" y2="1493" stroke="#eeeff3" stroke-width="1.2"/><line x1="2744.01" y1="453" x2="2744.01" y2="1493" stroke="#e6e7ee" stroke-width="1.2"/><line x1="2809.98" y1="453" x2="2809.98" y2="1493" stroke="#e6e7ee" stroke-width="1.2"/><line x1="2875.95" y1="453" x2="2875.95" y2="1493" stroke="#e6e7ee" stroke-width="1.2"/><line x1="2513.01" y1="460" x2="2513.01" y2="1492" stroke="#c8c8cc" stroke-width="1.6"/><rect x="580.68" y="1013.05" width="37.4" height="479.05" fill="#4453d6"/><rect x="646.65" y="1013.05" width="37.4" height="479.05" fill="#4453d6"/><rect x="712.62" y="1013.05" width="37.4" height="479.05" fill="#4453d6"/><rect x="778.59" y="1013.05" width="37.4" height="479.05" fill="#4453d6"/><rect x="844.56" y="1013.05" width="37.4" height="479.05" fill="#4453d6"/><rect x="1042.47" y="1013.05" width="37.4" height="479.05" fill="#4453d6"/><rect x="1108.44" y="1013.05" width="37.4" height="479.05" fill="#4453d6"/><rect x="1174.41" y="1013.05" width="37.4" height="479.05" fill="#4453d6"/><rect x="1240.38" y="1013.05" width="37.4" height="479.05" fill="#4453d6"/><rect x="1306.35" y="1013.05" width="37.4" height="479.05" fill="#4453d6"/><rect x="1504.26" y="1042.53" width="37.4" height="449.57" fill="#4453d6"/><rect x="1504.26" y="983.57" width="37.4" height="58.96" fill="#7fc1e5"/><rect x="1570.23" y="1042.53" width="37.4" height="449.57" fill="#4453d6"/><rect x="1570.23" y="983.57" width="37.4" height="58.96" fill="#7fc1e5"/><rect x="1636.20" y="1042.53" width="37.4" height="449.57" fill="#4453d6"/><rect x="1636.20" y="983.57" width="37.4" height="58.96" fill="#7fc1e5"/><rect x="1702.17" y="1042.53" width="37.4" height="449.57" fill="#4453d6"/><rect x="1702.17" y="983.57" width="37.4" height="58.96" fill="#7fc1e5"/><rect x="1768.14" y="1042.53" width="37.4" height="449.57" fill="#4453d6"/><rect x="1768.14" y="983.57" width="37.4" height="58.96" fill="#7fc1e5"/><rect x="1966.06" y="924.61" width="37.4" height="567.49" fill="#4453d6"/><rect x="1966.06" y="865.65" width="37.4" height="58.96" fill="#7fc1e5"/><rect x="2032.02" y="924.61" width="37.4" height="567.49" fill="#4453d6"/><rect x="2032.02" y="865.65" width="37.4" height="58.96" fill="#7fc1e5"/><rect x="2098.00" y="924.61" width="37.4" height="567.49" fill="#4453d6"/><rect x="2098.00" y="865.65" width="37.4" height="58.96" fill="#7fc1e5"/><rect x="2163.97" y="924.61" width="37.4" height="567.49" fill="#4453d6"/><rect x="2163.97" y="865.65" width="37.4" height="58.96" fill="#7fc1e5"/><rect x="2229.93" y="924.61" width="37.4" height="567.49" fill="#4453d6"/><rect x="2229.93" y="865.65" width="37.4" height="58.96" fill="#7fc1e5"/><rect x="2427.85" y="865.65" width="37.4" height="626.45" fill="#4453d6"/><rect x="2427.85" y="703.51" width="37.4" height="162.14" fill="#7fc1e5"/><rect x="2493.82" y="865.65" width="37.4" height="626.45" fill="#4453d6"/><rect x="2493.82" y="703.51" width="37.4" height="162.14" fill="#7fc1e5"/><rect x="2559.79" y="865.65" width="37.4" height="626.45" fill="#4453d6"/><rect x="2559.79" y="703.51" width="37.4" height="162.14" fill="#7fc1e5"/><rect x="2625.76" y="865.65" width="37.4" height="626.45" fill="#4453d6"/><rect x="2625.76" y="703.51" width="37.4" height="162.14" fill="#7fc1e5"/><rect x="2691.73" y="865.65" width="37.4" height="626.45" fill="#4453d6"/><rect x="2691.73" y="703.51" width="37.4" height="162.14" fill="#7fc1e5"/><path d="M599.38 931.98 L665.36 931.98 L731.33 931.98 L797.29 931.98 L863.26 931.98 C885.25 931.98 907.24 1492.10 929.23 1492.10 L995.20 1492.10 C1017.19 1492.10 1039.18 931.98 1061.17 931.98 L1127.14 931.98 L1193.12 931.98 L1259.09 931.98 L1325.05 931.98 C1347.04 931.98 1369.04 1492.10 1391.03 1492.10 L1456.99 1492.10 C1478.98 1492.10 1500.97 931.98 1522.96 931.98 L1588.93 931.98 L1654.90 931.98 L1720.88 931.98 L1786.84 931.98 C1808.83 931.98 1830.83 1492.10 1852.82 1492.10 L1918.78 1492.10 C1940.77 1492.10 1962.77 931.98 1984.76 931.98 L2050.72 931.98 L2116.70 931.98 L2182.66 931.98 L2248.63 931.98 C2270.62 931.98 2292.62 1492.10 2314.61 1492.10 L2380.57 1492.10 C2402.56 1492.10 2424.56 931.98 2446.55 931.98 L2512.51 931.98 L2578.49 931.98 L2644.45 931.98 L2710.43 931.98 C2732.41 931.98 2754.41 1492.10 2776.39 1492.10 L2842.37 1492.10 L2842.37 1492.10 L599.38 1492.10 Z" fill="rgba(160,80,228,0.25)"/><defs><clipPath id="chclip"><rect x="566" y="453" width="2304" height="1038.50"/></clipPath></defs><path d="M599.38 931.98 L665.36 931.98 L731.33 931.98 L797.29 931.98 L863.26 931.98 C885.25 931.98 907.24 1492.10 929.23 1492.10 L995.20 1492.10 C1017.19 1492.10 1039.18 931.98 1061.17 931.98 L1127.14 931.98 L1193.12 931.98 L1259.09 931.98 L1325.05 931.98 C1347.04 931.98 1369.04 1492.10 1391.03 1492.10 L1456.99 1492.10 C1478.98 1492.10 1500.97 931.98 1522.96 931.98 L1588.93 931.98 L1654.90 931.98 L1720.88 931.98 L1786.84 931.98 C1808.83 931.98 1830.83 1492.10 1852.82 1492.10 L1918.78 1492.10 C1940.77 1492.10 1962.77 931.98 1984.76 931.98 L2050.72 931.98 L2116.70 931.98 L2182.66 931.98 L2248.63 931.98 C2270.62 931.98 2292.62 1492.10 2314.61 1492.10 L2380.57 1492.10 C2402.56 1492.10 2424.56 931.98 2446.55 931.98 L2512.51 931.98 L2578.49 931.98 L2644.45 931.98 L2710.43 931.98 C2732.41 931.98 2754.41 1492.10 2776.39 1492.10 L2842.37 1492.10" fill="none" stroke="#a046e4" stroke-width="2" clip-path="url(#chclip)"/></svg>
<svg class="a" style="left:2502.51px;top:922.1px" width="20" height="20" viewBox="0 0 20 20"><circle cx="10" cy="10" r="7.9" fill="none" stroke="rgba(40,40,120,0.25)" stroke-width="1"/><circle cx="10" cy="10" r="6.05" fill="#a046e6" stroke="#fff" stroke-width="3.1"/></svg>
<div class="a" style="left:2085px;top:901.7px;width:413px;height:283.5px;background:#fff;box-shadow:0 1px 6px rgba(0,0,0,0.18)"></div>
<div class="t" style="left:1991.5px;width:600px;text-align:center;top:930.1px;font-size:22px;color:#2d3250;font-weight:400;-webkit-text-stroke:0.6px #2d3250;letter-spacing:0.3px">16th April 2024</div>
<div class="a" style="left:2109.3px;top:976.0px;width:15px;height:15px;border-radius:50%;background:#9b9db5"></div>
<div class="t" style="left:2145.0px;top:974.0px;font-size:19.1px;color:#6b6f88;font-weight:400;">Contracted Capacity</div>
<div class="t" style="right:396.6px;top:974.0px;font-size:19.1px;color:#6b6f88;font-weight:400;text-align:right;">76h</div>
<svg class="a" style="left:2109.3px;top:1008.1px" width="15" height="15" viewBox="0 0 15 15"><defs><clipPath id="cp1008"><circle cx="7.5" cy="7.5" r="7.5"/></clipPath></defs><g clip-path="url(#cp1008)" stroke="#d7d8e2" stroke-width="2.6"><line x1="-3" y1="9" x2="6" y2="18"/><line x1="-3" y1="3" x2="12" y2="18"/><line x1="1" y1="-1" x2="16" y2="14"/><line x1="7" y1="-3" x2="18" y2="8"/></g></svg>
<div class="t" style="left:2145.0px;top:1006.1px;font-size:19.1px;color:#6b6f88;font-weight:400;">Time Off</div>
<div class="t" style="right:396.6px;top:1006.1px;font-size:19.1px;color:#6b6f88;font-weight:400;text-align:right;">0h</div>
<div class="a" style="left:2109.3px;top:1040.2px;width:15px;height:15px;border-radius:50%;background:#dcb8f2"></div>
<div class="t" style="left:2145.0px;top:1038.2px;font-size:19.1px;color:#6b6f88;font-weight:400;">Effective Capacity</div>
<div class="t" style="right:396.6px;top:1038.2px;font-size:19.1px;color:#6b6f88;font-weight:400;text-align:right;">76h</div>
<div class="a" style="left:2109.3px;top:1072.3px;width:15px;height:15px;background:#4453d6"></div>
<div class="t" style="left:2145.0px;top:1070.3px;font-size:19.1px;color:#6b6f88;font-weight:400;">Confirmed Workload</div>
<div class="t" style="right:396.6px;top:1070.3px;font-size:19.1px;color:#6b6f88;font-weight:400;text-align:right;">85h</div>
<div class="a" style="left:2109.3px;top:1104.4px;width:15px;height:15px;background:#7fc1e5"></div>
<div class="t" style="left:2145.0px;top:1102.4px;font-size:19.1px;color:#6b6f88;font-weight:400;">Tentative Workload</div>
<div class="t" style="right:396.6px;top:1102.4px;font-size:19.1px;color:#6b6f88;font-weight:400;text-align:right;">22h</div>
<svg class="a" style="left:2109.3px;top:1134.7px" width="15" height="15" viewBox="0 0 15 15"><line x1="2" y1="1.4" x2="12.6" y2="1.4" stroke="#a24ae6" stroke-width="2" stroke-linecap="round"/><line x1="2" y1="14.05" x2="12.6" y2="14.05" stroke="#3d4fd8" stroke-width="2" stroke-linecap="round"/><line x1="7.2" y1="3.2" x2="7.2" y2="12.3" stroke="#a9abbf" stroke-width="1.3"/><line x1="5.8" y1="3.2" x2="8.6" y2="3.2" stroke="#a9abbf" stroke-width="0.9"/><line x1="5.8" y1="12.3" x2="8.6" y2="12.3" stroke="#a9abbf" stroke-width="0.9"/></svg>
<div class="t" style="left:2145.0px;top:1134.5px;font-size:19.1px;color:#6b6f88;font-weight:400;">Availability</div>
<div class="t" style="right:396.6px;top:1134.5px;font-size:19.1px;color:#6b6f88;font-weight:400;text-align:right;">-31h</div>
<div class="a" style="left:566.40px;top:1495px;width:66.47px;height:32px;background:#f6f7f9"></div>
<div class="a" style="left:566.40px;top:1527px;width:66.47px;height:33px;background:#f1f2f5"></div>
<div class="a" style="left:632.37px;top:1495px;width:66.47px;height:32px;background:#f6f7f9"></div>
<div class="a" style="left:632.37px;top:1527px;width:66.47px;height:33px;background:#f1f2f5"></div>
<div class="a" style="left:698.34px;top:1495px;width:66.47px;height:32px;background:#f6f7f9"></div>
<div class="a" style="left:698.34px;top:1527px;width:66.47px;height:33px;background:#f1f2f5"></div>
<div class="a" style="left:764.31px;top:1495px;width:66.47px;height:32px;background:#f6f7f9"></div>
<div class="a" style="left:764.31px;top:1527px;width:66.47px;height:33px;background:#f1f2f5"></div>
<div class="a" style="left:830.28px;top:1495px;width:66.47px;height:32px;background:#f6f7f9"></div>
<div class="a" style="left:830.28px;top:1527px;width:66.47px;height:33px;background:#f1f2f5"></div>
<div class="a" style="left:896.25px;top:1495px;width:66.47px;height:32px;background:#fff"></div>
<div class="a" style="left:896.25px;top:1527px;width:66.47px;height:33px;background:#f6f7f9"></div>
<div class="a" style="left:962.22px;top:1495px;width:66.47px;height:32px;background:#fff"></div>
<div class="a" style="left:962.22px;top:1527px;width:66.47px;height:33px;background:#f6f7f9"></div>
<div class="a" style="left:1028.19px;top:1495px;width:66.47px;height:32px;background:#f6f7f9"></div>
<div class="a" style="left:1028.19px;top:1527px;width:66.47px;height:33px;background:#f1f2f5"></div>
<div class="a" style="left:1094.16px;top:1495px;width:66.47px;height:32px;background:#f6f7f9"></div>
<div class="a" style="left:1094.16px;top:1527px;width:66.47px;height:33px;background:#f1f2f5"></div>
<div class="a" style="left:1160.13px;top:1495px;width:66.47px;height:32px;background:#f6f7f9"></div>
<div class="a" style="left:1160.13px;top:1527px;width:66.47px;height:33px;background:#f1f2f5"></div>
<div class="a" style="left:1226.10px;top:1495px;width:66.47px;height:32px;background:#f6f7f9"></div>
<div class="a" style="left:1226.10px;top:1527px;width:66.47px;height:33px;background:#f1f2f5"></div>
<div class="a" style="left:1292.07px;top:1495px;width:66.47px;height:32px;background:#f6f7f9"></div>
<div class="a" style="left:1292.07px;top:1527px;width:66.47px;height:33px;background:#f1f2f5"></div>
<div class="a" style="left:1358.04px;top:1495px;width:66.47px;height:32px;background:#fff"></div>
<div class="a" style="left:1358.04px;top:1527px;width:66.47px;height:33px;background:#f6f7f9"></div>
<div class="a" style="left:1424.01px;top:1495px;width:66.47px;height:32px;background:#fff"></div>
<div class="a" style="left:1424.01px;top:1527px;width:66.47px;height:33px;background:#f6f7f9"></div>
<div class="a" style="left:1489.98px;top:1495px;width:66.47px;height:32px;background:#fff"></div>
<div class="a" style="left:1489.98px;top:1527px;width:66.47px;height:33px;background:#f1f2f5"></div>
<div class="a" style="left:1555.95px;top:1495px;width:66.47px;height:32px;background:#fff"></div>
<div class="a" style="left:1555.95px;top:1527px;width:66.47px;height:33px;background:#f1f2f5"></div>
<div class="a" style="left:1621.92px;top:1495px;width:66.47px;height:32px;background:#fff"></div>
<div class="a" style="left:1621.92px;top:1527px;width:66.47px;height:33px;background:#f1f2f5"></div>
<div class="a" style="left:1687.89px;top:1495px;width:66.47px;height:32px;background:#fff"></div>
<div class="a" style="left:1687.89px;top:1527px;width:66.47px;height:33px;background:#f1f2f5"></div>
<div class="a" style="left:1753.86px;top:1495px;width:66.47px;height:32px;background:#8e95b8"></div>
<div class="a" style="left:1753.86px;top:1527px;width:66.47px;height:33px;background:#f1f2f5"></div>
<div class="a" style="left:1819.83px;top:1495px;width:66.47px;height:32px;background:#fff"></div>
<div class="a" style="left:1819.83px;top:1527px;width:66.47px;height:33px;background:#f6f7f9"></div>
<div class="a" style="left:1885.80px;top:1495px;width:66.47px;height:32px;background:#fff"></div>
<div class="a" style="left:1885.80px;top:1527px;width:66.47px;height:33px;background:#f6f7f9"></div>
<div class="a" style="left:1951.77px;top:1495px;width:66.47px;height:32px;background:#f6f7f9"></div>
<div class="a" style="left:1951.77px;top:1527px;width:66.47px;height:33px;background:#f1f2f5"></div>
<div class="a" style="left:2017.74px;top:1495px;width:66.47px;height:32px;background:#f6f7f9"></div>
<div class="a" style="left:2017.74px;top:1527px;width:66.47px;height:33px;background:#f1f2f5"></div>
<div class="a" style="left:2083.71px;top:1495px;width:66.47px;height:32px;background:#f6f7f9"></div>
<div class="a" style="left:2083.71px;top:1527px;width:66.47px;height:33px;background:#f1f2f5"></div>
<div class="a" style="left:2149.68px;top:1495px;width:66.47px;height:32px;background:#f6f7f9"></div>
<div class="a" style="left:2149.68px;top:1527px;width:66.47px;height:33px;background:#f1f2f5"></div>
<div class="a" style="left:2215.65px;top:1495px;width:66.47px;height:32px;background:#f6f7f9"></div>
<div class="a" style="left:2215.65px;top:1527px;width:66.47px;height:33px;background:#f1f2f5"></div>
<div class="a" style="left:2281.62px;top:1495px;width:66.47px;height:32px;background:#fff"></div>
<div class="a" style="left:2281.62px;top:1527px;width:66.47px;height:33px;background:#f6f7f9"></div>
<div class="a" style="left:2347.59px;top:1495px;width:66.47px;height:32px;background:#fff"></div>
<div class="a" style="left:2347.59px;top:1527px;width:66.47px;height:33px;background:#f6f7f9"></div>
<div class="a" style="left:2413.56px;top:1495px;width:66.47px;height:32px;background:#f6f7f9"></div>
<div class="a" style="left:2413.56px;top:1527px;width:66.47px;height:33px;background:#f1f2f5"></div>
<div class="a" style="left:2479.53px;top:1495px;width:66.47px;height:32px;background:#f6f7f9"></div>
<div class="a" style="left:2479.53px;top:1527px;width:66.47px;height:33px;background:#f1f2f5"></div>
<div class="a" style="left:2545.50px;top:1495px;width:66.47px;height:32px;background:#f6f7f9"></div>
<div class="a" style="left:2545.50px;top:1527px;width:66.47px;height:33px;background:#f1f2f5"></div>
<div class="a" style="left:2611.47px;top:1495px;width:66.47px;height:32px;background:#f6f7f9"></div>
<div class="a" style="left:2611.47px;top:1527px;width:66.47px;height:33px;background:#f1f2f5"></div>
<div class="a" style="left:2677.44px;top:1495px;width:66.47px;height:32px;background:#f6f7f9"></div>
<div class="a" style="left:2677.44px;top:1527px;width:66.47px;height:33px;background:#f1f2f5"></div>
<div class="a" style="left:2743.41px;top:1495px;width:66.47px;height:32px;background:#fff"></div>
<div class="a" style="left:2743.41px;top:1527px;width:66.47px;height:33px;background:#f6f7f9"></div>
<div class="a" style="left:2809.38px;top:1495px;width:66.47px;height:32px;background:#fff"></div>
<div class="a" style="left:2809.38px;top:1527px;width:66.47px;height:33px;background:#f6f7f9"></div>
<div class="a" style="left:566px;top:1492.5px;width:2304px;height:2.5px;background:#e2e4ec"></div>
<div class="a" style="left:565.65px;top:1495px;width:1.5px;height:65px;background:#dcdee8"></div>
<div class="a" style="left:895.25px;top:1495px;width:2px;height:65px;background:#d3d5e1"></div>
<div class="a" style="left:1027.44px;top:1495px;width:1.5px;height:65px;background:#dcdee8"></div>
<div class="a" style="left:1357.04px;top:1495px;width:2px;height:65px;background:#d3d5e1"></div>
<div class="a" style="left:1488.48px;top:1495px;width:3px;height:65px;background:#d3d5e1"></div>
<div class="a" style="left:1818.83px;top:1495px;width:2px;height:65px;background:#d3d5e1"></div>
<div class="a" style="left:1951.02px;top:1495px;width:1.5px;height:65px;background:#dcdee8"></div>
<div class="a" style="left:2280.62px;top:1495px;width:2px;height:65px;background:#d3d5e1"></div>
<div class="a" style="left:2412.81px;top:1495px;width:1.5px;height:65px;background:#dcdee8"></div>
<div class="a" style="left:2742.41px;top:1495px;width:2px;height:65px;background:#d3d5e1"></div>
<div class="a" style="left:2874.60px;top:1495px;width:1.5px;height:65px;background:#dcdee8"></div>
<div class="a" style="left:565.5px;top:1493px;width:1.5px;height:67px;background:#dfe1ea"></div>
<svg class="a" style="left:898.8px;top:1520.5px" width="9" height="13" viewBox="0 0 9 13"><path d="M0 0 L8 6.5 L0 13 Z" fill="#b0b3c6"/></svg>
<svg class="a" style="left:1015.7px;top:1520.5px" width="9" height="13" viewBox="0 0 9 13"><path d="M9 0 L1 6.5 L9 13 Z" fill="#b0b3c6"/></svg>
<svg class="a" style="left:1360.5px;top:1520.5px" width="9" height="13" viewBox="0 0 9 13"><path d="M0 0 L8 6.5 L0 13 Z" fill="#b0b3c6"/></svg>
<svg class="a" style="left:1477.5px;top:1520.5px" width="9" height="13" viewBox="0 0 9 13"><path d="M9 0 L1 6.5 L9 13 Z" fill="#b0b3c6"/></svg>
<svg class="a" style="left:1822.3px;top:1520.5px" width="9" height="13" viewBox="0 0 9 13"><path d="M0 0 L8 6.5 L0 13 Z" fill="#b0b3c6"/></svg>
<svg class="a" style="left:1939.3px;top:1520.5px" width="9" height="13" viewBox="0 0 9 13"><path d="M9 0 L1 6.5 L9 13 Z" fill="#b0b3c6"/></svg>
<svg class="a" style="left:2284.1px;top:1520.5px" width="9" height="13" viewBox="0 0 9 13"><path d="M0 0 L8 6.5 L0 13 Z" fill="#b0b3c6"/></svg>
<svg class="a" style="left:2401.1px;top:1520.5px" width="9" height="13" viewBox="0 0 9 13"><path d="M9 0 L1 6.5 L9 13 Z" fill="#b0b3c6"/></svg>
<svg class="a" style="left:2745.9px;top:1520.5px" width="9" height="13" viewBox="0 0 9 13"><path d="M0 0 L8 6.5 L0 13 Z" fill="#b0b3c6"/></svg>
<svg class="a" style="left:2862.8px;top:1520.5px" width="9" height="13" viewBox="0 0 9 13"><path d="M9 0 L1 6.5 L9 13 Z" fill="#b0b3c6"/></svg>
<div class="t" style="left:299.4px;width:600px;text-align:center;top:1503.0px;font-size:16.8px;color:#5c6080;font-weight:400;-webkit-text-stroke:0.2px #5c6080;">18</div>
<div class="t" style="left:365.4px;width:600px;text-align:center;top:1503.0px;font-size:16.8px;color:#5c6080;font-weight:400;-webkit-text-stroke:0.2px #5c6080;">19</div>
<div class="t" style="left:431.3px;width:600px;text-align:center;top:1503.0px;font-size:16.8px;color:#5c6080;font-weight:400;-webkit-text-stroke:0.2px #5c6080;">20</div>
<div class="t" style="left:497.3px;width:600px;text-align:center;top:1503.0px;font-size:16.8px;color:#5c6080;font-weight:400;-webkit-text-stroke:0.2px #5c6080;">21</div>
<div class="t" style="left:563.3px;width:600px;text-align:center;top:1503.0px;font-size:16.8px;color:#5c6080;font-weight:400;-webkit-text-stroke:0.2px #5c6080;">22</div>
<div class="t" style="left:629.2px;width:600px;text-align:center;top:1503.0px;font-size:16.8px;color:#9fa2b6;font-weight:400;-webkit-text-stroke:0.2px #9fa2b6;">23</div>
<div class="t" style="left:695.2px;width:600px;text-align:center;top:1503.0px;font-size:16.8px;color:#9fa2b6;font-weight:400;-webkit-text-stroke:0.2px #9fa2b6;">24</div>
<div class="t" style="left:761.2px;width:600px;text-align:center;top:1503.0px;font-size:16.8px;color:#5c6080;font-weight:400;-webkit-text-stroke:0.2px #5c6080;">25</div>
<div class="t" style="left:827.1px;width:600px;text-align:center;top:1503.0px;font-size:16.8px;color:#5c6080;font-weight:400;-webkit-text-stroke:0.2px #5c6080;">26</div>
<div class="t" style="left:893.1px;width:600px;text-align:center;top:1503.0px;font-size:16.8px;color:#5c6080;font-weight:400;-webkit-text-stroke:0.2px #5c6080;">27</div>
<div class="t" style="left:959.1px;width:600px;text-align:center;top:1503.0px;font-size:16.8px;color:#5c6080;font-weight:400;-webkit-text-stroke:0.2px #5c6080;">28</div>
<div class="t" style="left:1025.1px;width:600px;text-align:center;top:1503.0px;font-size:16.8px;color:#5c6080;font-weight:400;-webkit-text-stroke:0.2px #5c6080;">29</div>
<div class="t" style="left:1091.0px;width:600px;text-align:center;top:1503.0px;font-size:16.8px;color:#9fa2b6;font-weight:400;-webkit-text-stroke:0.2px #9fa2b6;">30</div>
<div class="t" style="left:1157.0px;width:600px;text-align:center;top:1503.0px;font-size:16.8px;color:#9fa2b6;font-weight:400;-webkit-text-stroke:0.2px #9fa2b6;">31</div>
<div class="t" style="left:1223.0px;width:600px;text-align:center;top:1503.0px;font-size:16.8px;color:#2d3250;font-weight:400;-webkit-text-stroke:0.35px #2d3250;">1</div>
<div class="t" style="left:1288.9px;width:600px;text-align:center;top:1503.0px;font-size:16.8px;color:#2d3250;font-weight:400;-webkit-text-stroke:0.35px #2d3250;">2</div>
<div class="t" style="left:1354.9px;width:600px;text-align:center;top:1503.0px;font-size:16.8px;color:#2d3250;font-weight:400;-webkit-text-stroke:0.35px #2d3250;">3</div>
<div class="t" style="left:1420.9px;width:600px;text-align:center;top:1503.0px;font-size:16.8px;color:#2d3250;font-weight:400;-webkit-text-stroke:0.35px #2d3250;">4</div>
<div class="t" style="left:1486.8px;width:600px;text-align:center;top:1503.0px;font-size:16.8px;color:#fff;font-weight:400;-webkit-text-stroke:0.6px #fff;">5</div>
<div class="t" style="left:1552.8px;width:600px;text-align:center;top:1503.0px;font-size:16.8px;color:#9fa2b6;font-weight:400;-webkit-text-stroke:0.2px #9fa2b6;">6</div>
<div class="t" style="left:1618.8px;width:600px;text-align:center;top:1503.0px;font-size:16.8px;color:#9fa2b6;font-weight:400;-webkit-text-stroke:0.2px #9fa2b6;">7</div>
<div class="t" style="left:1684.8px;width:600px;text-align:center;top:1503.0px;font-size:16.8px;color:#5c6080;font-weight:400;-webkit-text-stroke:0.2px #5c6080;">8</div>
<div class="t" style="left:1750.7px;width:600px;text-align:center;top:1503.0px;font-size:16.8px;color:#5c6080;font-weight:400;-webkit-text-stroke:0.2px #5c6080;">9</div>
<div class="t" style="left:1816.7px;width:600px;text-align:center;top:1503.0px;font-size:16.8px;color:#5c6080;font-weight:400;-webkit-text-stroke:0.2px #5c6080;">10</div>
<div class="t" style="left:1882.7px;width:600px;text-align:center;top:1503.0px;font-size:16.8px;color:#5c6080;font-weight:400;-webkit-text-stroke:0.2px #5c6080;">11</div>
<div class="t" style="left:1948.6px;width:600px;text-align:center;top:1503.0px;font-size:16.8px;color:#5c6080;font-weight:400;-webkit-text-stroke:0.2px #5c6080;">12</div>
<div class="t" style="left:2014.6px;width:600px;text-align:center;top:1503.0px;font-size:16.8px;color:#9fa2b6;font-weight:400;-webkit-text-stroke:0.2px #9fa2b6;">13</div>
<div class="t" style="left:2080.6px;width:600px;text-align:center;top:1503.0px;font-size:16.8px;color:#9fa2b6;font-weight:400;-webkit-text-stroke:0.2px #9fa2b6;">14</div>
<div class="t" style="left:2146.5px;width:600px;text-align:center;top:1503.0px;font-size:16.8px;color:#5c6080;font-weight:400;-webkit-text-stroke:0.2px #5c6080;">15</div>
<div class="t" style="left:2212.5px;width:600px;text-align:center;top:1503.0px;font-size:16.8px;color:#5c6080;font-weight:400;-webkit-text-stroke:0.2px #5c6080;">16</div>
<div class="t" style="left:2278.5px;width:600px;text-align:center;top:1503.0px;font-size:16.8px;color:#5c6080;font-weight:400;-webkit-text-stroke:0.2px #5c6080;">17</div>
<div class="t" style="left:2344.5px;width:600px;text-align:center;top:1503.0px;font-size:16.8px;color:#5c6080;font-weight:400;-webkit-text-stroke:0.2px #5c6080;">18</div>
<div class="t" style="left:2410.4px;width:600px;text-align:center;top:1503.0px;font-size:16.8px;color:#5c6080;font-weight:400;-webkit-text-stroke:0.2px #5c6080;">19</div>
<div class="t" style="left:2476.4px;width:600px;text-align:center;top:1503.0px;font-size:16.8px;color:#9fa2b6;font-weight:400;-webkit-text-stroke:0.2px #9fa2b6;">20</div>
<div class="t" style="left:2542.4px;width:600px;text-align:center;top:1503.0px;font-size:16.8px;color:#9fa2b6;font-weight:400;-webkit-text-stroke:0.2px #9fa2b6;">21</div>
<div class="t" style="left:575.0px;top:1534.4px;font-size:18px;color:#6b6f88;font-weight:400;">Mar '24</div>
<div class="t" style="left:1500.0px;top:1534.4px;font-size:18px;color:#2d3250;font-weight:400;-webkit-text-stroke:0.35px #2d3250;">Apr '24</div>
<div class="a" style="left:7.5px;top:1445.3px;width:483px;height:104.3px;background:#fff;border-radius:9px"></div>
<div class="a" style="left:19px;top:1463px;width:15px;height:15px;background:#4453d6"></div>
<div class="t" style="left:41.3px;top:1460.8px;font-size:19.1px;color:#3b4054;font-weight:400;">Confirmed Workload</div>
<div class="a" style="left:227px;top:1463px;width:15px;height:15px;background:#7fc1e5"></div>
<div class="t" style="left:250.0px;top:1460.8px;font-size:19.1px;color:#3b4054;font-weight:400;">Tentative Workload</div>
<div class="a" style="left:19px;top:1490px;width:15px;height:15px;border-radius:50%;background:#dcb8f2"></div>
<div class="t" style="left:41.3px;top:1487.8px;font-size:19.1px;color:#3b4054;font-weight:400;">Effective Capacity</div>
<div class="a" style="left:207px;top:1490px;width:15px;height:15px;border-radius:50%;background:#9b9db5"></div>
<div class="t" style="left:230.0px;top:1487.8px;font-size:19.1px;color:#3b4054;font-weight:400;">Contracted Capacity</div>
<svg class="a" style="left:19px;top:1517px" width="15" height="15" viewBox="0 0 15 15"><defs><clipPath id="cp1517"><circle cx="7.5" cy="7.5" r="7.5"/></clipPath></defs><g clip-path="url(#cp1517)" stroke="#d7d8e2" stroke-width="2.6"><line x1="-3" y1="9" x2="6" y2="18"/><line x1="-3" y1="3" x2="12" y2="18"/><line x1="1" y1="-1" x2="16" y2="14"/><line x1="7" y1="-3" x2="18" y2="8"/></g></svg>
<div class="t" style="left:41.3px;top:1514.8px;font-size:19.1px;color:#3b4054;font-weight:400;">Time Off</div>
</body></html>
